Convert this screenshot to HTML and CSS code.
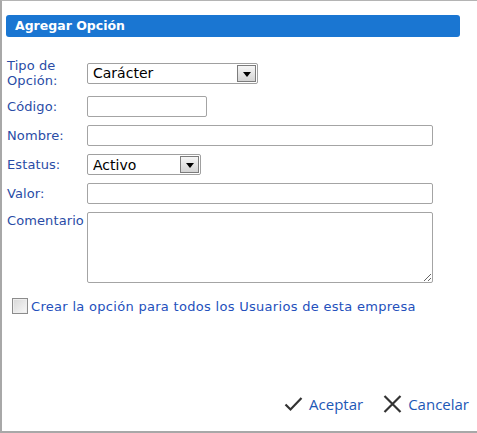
FILE: index.html
```html
<!DOCTYPE html>
<html lang="es">
<head>
    <meta charset="UTF-8">
    <meta name="viewport" content="width=device-width, initial-scale=1.0">
    <title>Agregar Opción</title>
    <link rel="stylesheet" href="styles.css">
</head>
<body>
    <div id="dialog">
        <div class="dialog-title">Agregar Opción</div>

        <form class="option-form">
            <label class="field-label" for="tipo">Tipo de<br>Opción:</label>
            <div class="select-box wide">
                <select id="tipo">
                    <option>Carácter</option>
                    <option>Número</option>
                    <option>Fecha</option>
                </select>
                <span class="select-arrow"></span>
            </div>

            <label class="field-label" for="codigo">Código:</label>
            <input id="codigo" class="text-input short" type="text">

            <label class="field-label" for="nombre">Nombre:</label>
            <input id="nombre" class="text-input" type="text">

            <label class="field-label" for="estatus">Estatus:</label>
            <div class="select-box narrow">
                <select id="estatus">
                    <option>Activo</option>
                    <option>Inactivo</option>
                </select>
                <span class="select-arrow"></span>
            </div>

            <label class="field-label" for="valor">Valor:</label>
            <input id="valor" class="text-input" type="text">

            <label class="field-label top" for="comentario">Comentario</label>
            <textarea id="comentario" class="text-area"></textarea>
        </form>

        <label class="check-row">
            <input type="checkbox" class="check">
            <span>Crear la opción para todos los Usuarios de esta empresa</span>
        </label>

        <div class="dialog-buttons">
            <button type="button" class="link-btn">
                <svg width="19" height="16" viewBox="0 0 19 16">
                    <path d="M1.5 8.5 L6.5 13.5 L17.5 2" fill="none" stroke="#333" stroke-width="2.2"/>
                </svg>
                Aceptar
            </button>
            <button type="button" class="link-btn">
                <svg width="19" height="18" viewBox="0 0 19 18">
                    <path d="M1.5 1 L17.5 17 M17.5 1 L1.5 17" fill="none" stroke="#333" stroke-width="2.2"/>
                </svg>
                Cancelar
            </button>
        </div>
    </div>
</body>
</html>
```

FILE: styles.css
```css
body {
    margin: 0;
    padding: 0;
    background-color: #fff;
    font-family: "DejaVu Sans", Verdana, sans-serif;
}

#dialog {
    width: 477px;
    height: 433px;
    box-sizing: border-box;
    display: flex;
    flex-direction: column;
    background-color: #fff;
    border-top: 1px solid #b4b4b4;
    border-left: 2px solid #a8a8a8;
    border-bottom: 2px solid #a8a8a8;
}

.dialog-title {
    margin: 14px 17px 0 4px;
    height: 22px;
    line-height: 22px;
    padding-left: 9px;
    background-color: #1a76d2;
    border-radius: 3px;
    color: #fff;
    font-weight: bold;
    font-size: 12.5px;
}

.option-form {
    display: grid;
    grid-template-columns: 80px auto;
    align-items: center;
    justify-items: start;
    row-gap: 8px;
    margin-top: 21px;
    padding-left: 5px;
}

.field-label {
    color: #2a4ca6;
    font-size: 13px;
    line-height: 15px;
    letter-spacing: 0.1px;
}

.field-label.top {
    align-self: start;
    margin-top: 1px;
}

.text-input {
    height: 21px;
    box-sizing: border-box;
    width: 346px;
    margin: 0;
    border: 1px solid #a4a4a4;
    border-radius: 2px;
    font-size: 13px;
}

.text-input.short {
    width: 120px;
}

.text-area {
    width: 346px;
    height: 71px;
    box-sizing: border-box;
    margin: 0;
    border: 1px solid #a4a4a4;
    border-radius: 2px;
    font-size: 13px;
}

.select-box {
    display: flex;
    align-items: center;
    height: 21px;
    box-sizing: border-box;
    border: 1px solid #a0a0a0;
    border-radius: 2px;
    padding-right: 1px;
}

.select-box.wide {
    width: 171px;
}

.select-box.narrow {
    width: 114px;
}

.select-box select {
    flex: 1;
    min-width: 0;
    height: 100%;
    border: none;
    outline: none;
    background: transparent;
    appearance: none;
    -webkit-appearance: none;
    padding: 0 0 0 5px;
    font-family: "DejaVu Sans", Verdana, sans-serif;
    font-size: 14px;
    color: #000;
}

.select-arrow {
    position: relative;
    width: 19px;
    height: 17px;
    box-sizing: border-box;
    border: 1px solid #7c7c7c;
    background: linear-gradient(#f6f6f6, #d4d4d4);
}

.select-arrow::after {
    content: "";
    position: absolute;
    left: 5px;
    top: 6px;
    border-left: 4px solid transparent;
    border-right: 4px solid transparent;
    border-top: 5px solid #000;
}

.check-row {
    display: flex;
    align-items: center;
    gap: 3px;
    margin: 15px 0 0 10px;
    color: #2450bc;
    font-size: 13px;
    letter-spacing: 0.3px;
}

.check {
    appearance: none;
    -webkit-appearance: none;
    width: 16px;
    height: 16px;
    margin: 0;
    box-sizing: border-box;
    border: 1px solid #8c8c8c;
    background: linear-gradient(135deg, #d8d8d8, #f8f8f8);
    box-shadow: inset 0 0 0 1px #eee;
}

.dialog-buttons {
    margin-top: auto;
    display: flex;
    justify-content: flex-end;
    gap: 20px;
    padding: 0 8px 17px 0;
}

.link-btn {
    display: flex;
    align-items: center;
    gap: 6px;
    padding: 0;
    border: none;
    background: none;
    cursor: pointer;
    color: #1d58b6;
    font-family: "Open Sans", sans-serif;
    font-size: 15px;
}
```
